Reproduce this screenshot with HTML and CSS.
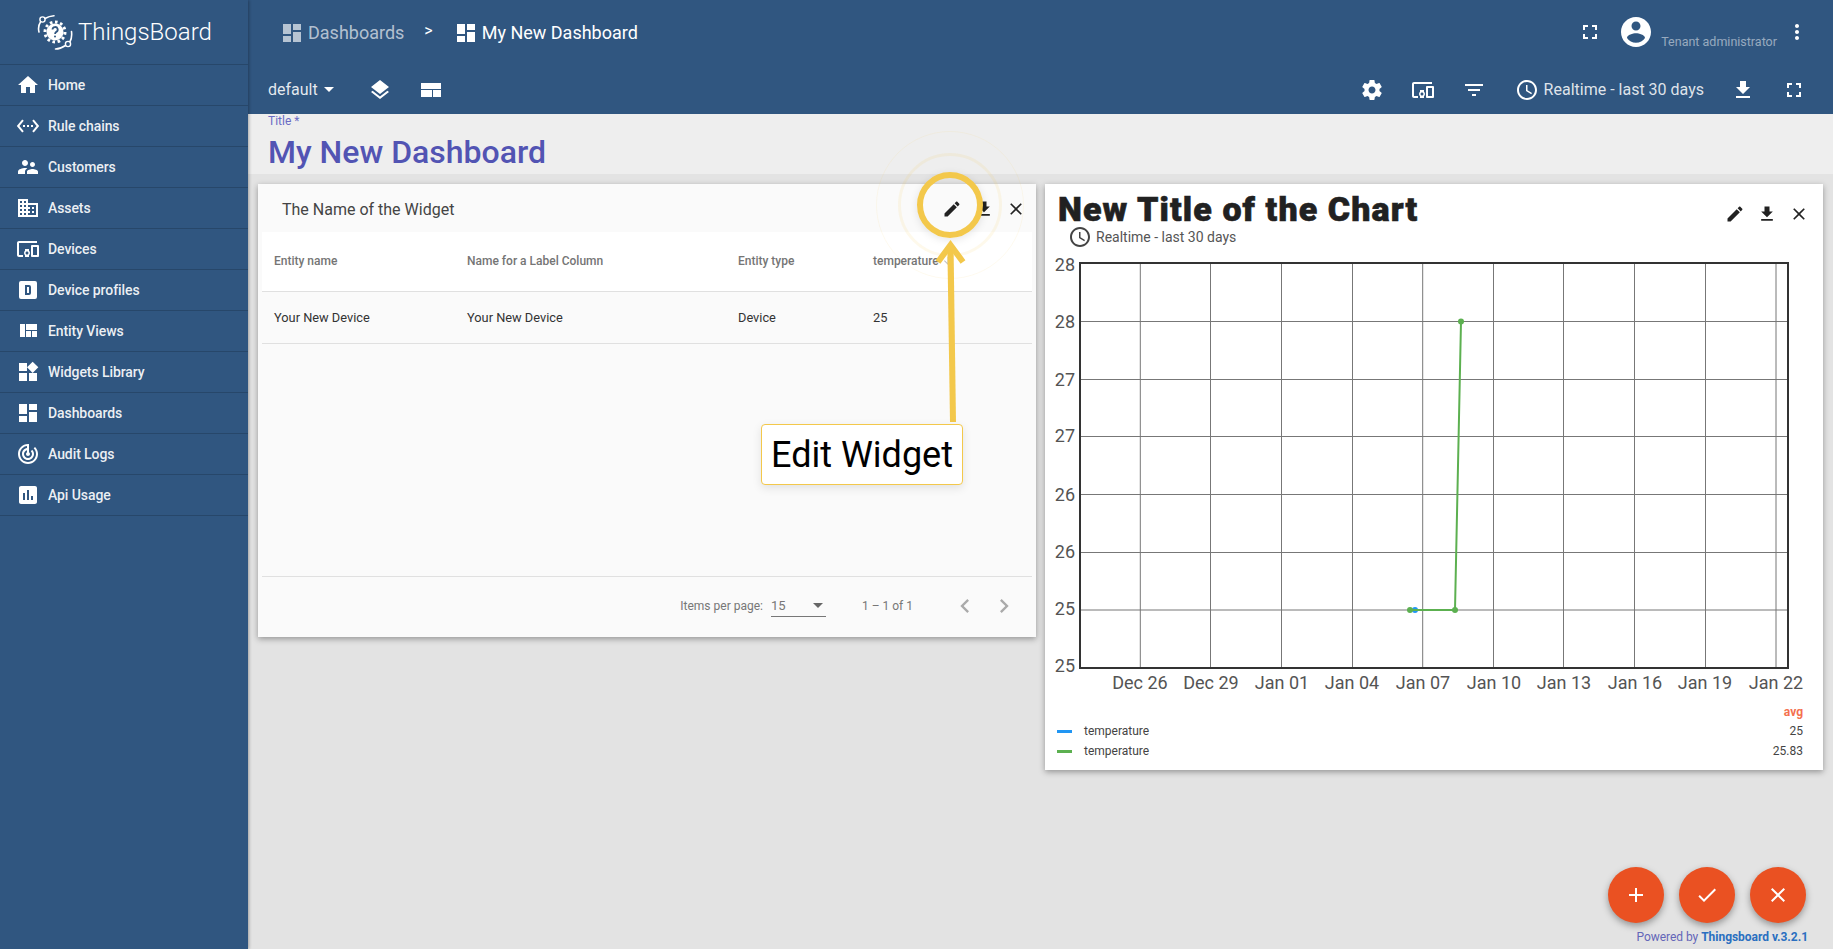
FILE: index.html
```html
<!DOCTYPE html>
<html lang="en">
<head>
<meta charset="utf-8">
<title>ThingsBoard</title>
<link rel="stylesheet" href="styles.css">
</head>
<body>
<svg class="sprite" xmlns="http://www.w3.org/2000/svg">
  <symbol id="i-home" viewBox="0 0 24 24"><path d="M10 20v-6h4v6h5v-8h3L12 3 2 12h3v8z"/></symbol>
  <symbol id="i-rule" viewBox="0 0 24 24"><path d="M7.77 6.76L6.23 5.48.82 12l5.41 6.52 1.54-1.28L3.42 12l4.35-5.24zM7 13h2v-2H7v2zm10-2h-2v2h2v-2zm-6 2h2v-2h-2v2zm6.77-7.52l-1.54 1.28L20.58 12l-4.35 5.24 1.54 1.28L23.18 12l-5.41-6.52z"/></symbol>
  <symbol id="i-people" viewBox="0 0 24 24"><path d="M16.5 12c1.38 0 2.49-1.12 2.49-2.5S17.88 7 16.5 7C15.12 7 14 8.12 14 9.5s1.12 2.5 2.5 2.5zM9 11c1.66 0 2.99-1.34 2.99-3S10.66 5 9 5C7.34 5 6 6.34 6 8s1.34 3 3 3zm7.5 3c-1.83 0-5.5.92-5.5 2.75V19h11v-2.25c0-1.83-3.67-2.75-5.5-2.75zM9 13c-2.33 0-7 1.17-7 3.5V19h7v-2.25c0-.85.33-2.34 2.37-3.47C10.5 13.1 9.66 13 9 13z"/></symbol>
  <symbol id="i-domain" viewBox="0 0 24 24"><path d="M12 7V3H2v18h20V7H12zM6 19H4v-2h2v2zm0-4H4v-2h2v2zm0-4H4V9h2v2zm0-4H4V5h2v2zm4 12H8v-2h2v2zm0-4H8v-2h2v2zm0-4H8V9h2v2zm0-4H8V5h2v2zm10 12h-8v-2h2v-2h-2v-2h2v-2h-2V9h8v10zm-2-8h-2v2h2v-2zm0 4h-2v2h2v-2z"/></symbol>
  <symbol id="i-devices" viewBox="0 0 24 24"><path d="M3 6h18V4H3c-1.1 0-2 .9-2 2v12c0 1.1.9 2 2 2h4v-2H3V6zm10 6H9v1.78c-.61.55-1 1.33-1 2.22s.39 1.67 1 2.22V20h4v-1.78c.61-.55 1-1.34 1-2.22s-.39-1.67-1-2.22V12zm-2 5.5c-.83 0-1.5-.67-1.5-1.5s.67-1.5 1.5-1.5 1.5.67 1.5 1.5-.67 1.5-1.5 1.5zM22 8h-6c-.5 0-1 .5-1 1v10c0 .5.5 1 1 1h6c.5 0 1-.5 1-1V9c0-.5-.5-1-1-1zm-1 10h-4v-8h4v8z"/></symbol>
  <symbol id="i-dbox" viewBox="0 0 24 24"><path fill-rule="evenodd" d="M9 7V17H13A2 2 0 0 0 15 15V9A2 2 0 0 0 13 7H9M11 9H13V15H11V9M5 3H19A2 2 0 0 1 21 5V19A2 2 0 0 1 19 21H5A2 2 0 0 1 3 19V5A2 2 0 0 1 5 3Z"/></symbol>
  <symbol id="i-quilt" viewBox="0 0 24 24"><path d="M10 18h5v-6h-5v6zm-6 0h5V5H4v13zm12 0h5v-6h-5v6zM10 5v6h11V5H10z"/></symbol>
  <symbol id="i-widgets" viewBox="0 0 24 24"><path d="M13 13v8h8v-8h-8zM3 21h8v-8H3v8zM3 3v8h8V3H3zm13.66-1.31L11 7.34 16.66 13l5.66-5.66-5.66-5.65z"/></symbol>
  <symbol id="i-dash" viewBox="0 0 24 24"><path d="M3 13h8V3H3v10zm0 8h8v-6H3v6zm10 0h8V11h-8v10zm0-18v6h8V3h-8z"/></symbol>
  <symbol id="i-track" viewBox="0 0 24 24"><path d="M19.07 4.93l-1.41 1.41C19.1 7.79 20 9.79 20 12c0 4.42-3.58 8-8 8s-8-3.58-8-8c0-4.08 3.05-7.44 7-7.93v2.02C8.16 6.57 6 9.03 6 12c0 3.31 2.69 6 6 6s6-2.69 6-6c0-1.66-.67-3.16-1.76-4.24l-1.41 1.41C15.55 9.9 16 10.9 16 12c0 2.21-1.79 4-4 4s-4-1.79-4-4c0-1.86 1.28-3.41 3-3.86v2.14c-.6.35-1 .98-1 1.72 0 1.1.9 2 2 2s2-.9 2-2c0-.74-.4-1.38-1-1.72V2h-1C6.48 2 2 6.48 2 12s4.48 10 10 10 10-4.48 10-10c0-2.76-1.12-5.26-2.93-7.07z"/></symbol>
  <symbol id="i-chart" viewBox="0 0 24 24"><path d="M19 3H5c-1.1 0-2 .9-2 2v14c0 1.1.9 2 2 2h14c1.1 0 2-.9 2-2V5c0-1.1-.9-2-2-2zM9 17H7v-7h2v7zm4 0h-2V7h2v10zm4 0h-2v-4h2v4z"/></symbol>
  <symbol id="i-layers" viewBox="0 0 24 24"><path d="M11.99 18.54l-7.37-5.73L3 14.07l9 7 9-7-1.63-1.27-7.38 5.74zM12 16l7.36-5.73L21 9l-9-7-9 7 1.63 1.27L12 16z"/></symbol>
  <symbol id="i-layout" viewBox="0 0 24 24"><path d="M2 5h20v6H2zM2 12h11v7H2zM14 12h8v7h-8z"/></symbol>
  <symbol id="i-full" viewBox="0 0 24 24"><path d="M7 14H5v5h5v-2H7v-3zm-2-4h2V7h3V5H5v5zm12 7h-3v2h5v-5h-2v3zM14 5v2h3v3h2V5h-5z"/></symbol>
  <symbol id="i-account" viewBox="0 0 24 24"><path d="M12 2C6.48 2 2 6.48 2 12s4.48 10 10 10 10-4.48 10-10S17.52 2 12 2zm0 3c1.66 0 3 1.34 3 3s-1.34 3-3 3-3-1.34-3-3 1.34-3 3-3zm0 14.2c-2.5 0-4.71-1.28-6-3.22.03-1.99 4-3.08 6-3.08 1.99 0 5.97 1.09 6 3.08-1.29 1.94-3.5 3.22-6 3.22z"/></symbol>
  <symbol id="i-more" viewBox="0 0 24 24"><path d="M12 8c1.1 0 2-.9 2-2s-.9-2-2-2-2 .9-2 2 .9 2 2 2zm0 2c-1.1 0-2 .9-2 2s.9 2 2 2 2-.9 2-2-.9-2-2-2zm0 6c-1.1 0-2 .9-2 2s.9 2 2 2 2-.9 2-2-.9-2-2-2z"/></symbol>
  <symbol id="i-gear" viewBox="0 0 24 24"><path d="M19.43 12.98c.04-.32.07-.64.07-.98s-.03-.66-.07-.98l2.11-1.65c.19-.15.24-.42.12-.64l-2-3.46c-.12-.22-.39-.3-.61-.22l-2.49 1c-.52-.4-1.08-.73-1.69-.98l-.38-2.65C14.46 2.18 14.25 2 14 2h-4c-.25 0-.46.18-.49.42l-.38 2.65c-.61.25-1.17.59-1.69.98l-2.49-1c-.23-.09-.49 0-.61.22l-2 3.46c-.13.22-.07.49.12.64l2.11 1.65c-.04.32-.07.65-.07.98s.03.66.07.98l-2.11 1.65c-.19.15-.24.42-.12.64l2 3.46c.12.22.39.3.61.22l2.49-1c.52.4 1.08.73 1.69.98l.38 2.65c.03.24.24.42.49.42h4c.25 0 .46-.18.49-.42l.38-2.65c.61-.25 1.17-.59 1.69-.98l2.49 1c.23.09.49 0 .61-.22l2-3.46c.12-.22.07-.49-.12-.64l-2.11-1.65zM12 15.5c-1.93 0-3.5-1.57-3.5-3.5s1.57-3.5 3.5-3.5 3.5 1.57 3.5 3.5-1.57 3.5-3.5 3.5z"/></symbol>
  <symbol id="i-filter" viewBox="0 0 24 24"><path d="M10 18h4v-2h-4v2zM3 6v2h18V6H3zm3 7h12v-2H6v2z"/></symbol>
  <symbol id="i-clock" viewBox="0 0 24 24"><path d="M11.99 2C6.47 2 2 6.48 2 12s4.47 10 9.99 10C17.52 22 22 17.52 22 12S17.52 2 11.99 2zM12 20c-4.42 0-8-3.58-8-8s3.58-8 8-8 8 3.58 8 8-3.58 8-8 8zm.5-13H11v6l5.25 3.15.75-1.23-4.5-2.67z"/></symbol>
  <symbol id="i-down" viewBox="0 0 24 24"><path d="M19 9h-4V3H9v6H5l7 7 7-7zM5 18v2h14v-2H5z"/></symbol>
  <symbol id="i-edit" viewBox="0 0 24 24"><path d="M3 17.25V21h3.75L17.81 9.94l-3.75-3.75L3 17.25zM20.71 7.04c.39-.39.39-1.02 0-1.41l-2.34-2.34c-.39-.39-1.02-.39-1.41 0l-1.83 1.83 3.75 3.75 1.83-1.83z"/></symbol>
  <symbol id="i-close" viewBox="0 0 24 24"><path d="M19 6.41L17.59 5 12 10.59 6.41 5 5 6.41 10.59 12 5 17.59 6.41 19 12 13.41 17.59 19 19 17.59 13.41 12z"/></symbol>
  <symbol id="i-add" viewBox="0 0 24 24"><path d="M19 13h-6v6h-2v-6H5v-2h6V5h2v6h6v2z"/></symbol>
  <symbol id="i-check" viewBox="0 0 24 24"><path d="M9 16.17L4.83 12l-1.42 1.41L9 19 21 7l-1.41-1.41z"/></symbol>
  <symbol id="i-prev" viewBox="0 0 24 24"><path d="M15.41 7.41L14 6l-6 6 6 6 1.41-1.41L10.83 12z"/></symbol>
  <symbol id="i-next" viewBox="0 0 24 24"><path d="M10 6L8.59 7.41 13.17 12l-4.58 4.59L10 18l6-6z"/></symbol>
  <symbol id="i-sort" viewBox="0 0 24 24"><path d="M20 12l-1.41-1.41L13 16.17V4h-2v12.17l-5.58-5.59L4 12l8 8 8-8z"/></symbol>
</svg>

<div class="app">
  <aside class="sidebar">
    <div class="brand">
      <svg class="logo" viewBox="0 0 36 36">
        <circle class="logo-teeth" cx="18" cy="18" r="10"/>
        <circle class="logo-core" cx="18" cy="18" r="8.5"/>
        <path class="logo-q" d="M15.5 15.5a2.6 2.6 0 1 1 3.8 2.4c-.9.5-1.2 1-1.2 2.1"/>
        <circle class="logo-qdot" cx="18" cy="22.6" r="1"/>
        <circle class="logo-ring" cx="5.5" cy="5.5" r="2.6"/>
        <path class="logo-arc" d="M8 4.5c2.5-1.500 5-2.500 9-2.800M3.500 8c-2 3-2.500 6-1.500 10"/>
        <circle class="logo-ring" cx="31" cy="30" r="2.600"/>
        <path class="logo-arc" d="M28.500 31.500c-3 2-6 3.500-10 3.500M33 27.500c1.700-3 2-6 1.500-10"/>
      </svg>
      <span class="brand-name">ThingsBoard</span>
    </div>
    <nav class="menu">
      <a class="menu-item"><svg class="ico"><use href="#i-home"/></svg><span>Home</span></a>
      <a class="menu-item"><svg class="ico"><use href="#i-rule"/></svg><span>Rule chains</span></a>
      <a class="menu-item"><svg class="ico"><use href="#i-people"/></svg><span>Customers</span></a>
      <a class="menu-item"><svg class="ico"><use href="#i-domain"/></svg><span>Assets</span></a>
      <a class="menu-item"><svg class="ico"><use href="#i-devices"/></svg><span>Devices</span></a>
      <a class="menu-item"><svg class="ico"><use href="#i-dbox"/></svg><span>Device profiles</span></a>
      <a class="menu-item"><svg class="ico"><use href="#i-quilt"/></svg><span>Entity Views</span></a>
      <a class="menu-item"><svg class="ico"><use href="#i-widgets"/></svg><span>Widgets Library</span></a>
      <a class="menu-item"><svg class="ico"><use href="#i-dash"/></svg><span>Dashboards</span></a>
      <a class="menu-item"><svg class="ico"><use href="#i-track"/></svg><span>Audit Logs</span></a>
      <a class="menu-item"><svg class="ico"><use href="#i-chart"/></svg><span>Api Usage</span></a>
    </nav>
  </aside>

  <main class="main">
    <header class="toolbar">
      <div class="bar-top">
        <div class="crumbs">
          <svg class="ico dim"><use href="#i-dash"/></svg>
          <span class="crumb-dim">Dashboards</span>
          <span class="crumb-sep">&gt;</span>
          <svg class="ico"><use href="#i-dash"/></svg>
          <span class="crumb-cur">My New Dashboard</span>
        </div>
        <div class="user">
          <svg class="ico"><use href="#i-full"/></svg>
          <svg class="avatar"><use href="#i-account"/></svg>
          <span class="role">Tenant administrator</span>
          <svg class="ico"><use href="#i-more"/></svg>
        </div>
      </div>
      <div class="bar-bottom">
        <div class="state">default<span class="caret"></span></div>
        <svg class="ico layers"><use href="#i-layers"/></svg>
        <svg class="ico layout"><use href="#i-layout"/></svg>
        <div class="actions">
          <svg class="ico"><use href="#i-gear"/></svg>
          <svg class="ico"><use href="#i-devices"/></svg>
          <svg class="ico"><use href="#i-filter"/></svg>
          <div class="timewindow"><svg class="ico"><use href="#i-clock"/></svg><span>Realtime - last 30 days</span></div>
          <svg class="ico"><use href="#i-down"/></svg>
          <svg class="ico"><use href="#i-full"/></svg>
        </div>
      </div>
    </header>

    <section class="title-panel">
      <div class="title-label">Title *</div>
      <div class="title-value">My New Dashboard</div>
    </section>

    <section class="grid">
      <article class="widget table-widget">
        <div class="table-head">
          <span class="table-title">The Name of the Widget</span>
          <div class="tools">
            <svg class="tool"><use href="#i-edit"/></svg>
            <svg class="tool"><use href="#i-down"/></svg>
            <svg class="tool"><use href="#i-close"/></svg>
          </div>
        </div>
        <div class="table">
          <div class="row row-head">
            <span>Entity name</span><span>Name for a Label Column</span><span>Entity type</span>
            <span>temperature<svg class="sort"><use href="#i-sort"/></svg></span>
          </div>
          <div class="row row-body">
            <span>Your New Device</span><span>Your New Device</span><span>Device</span><span>25</span>
          </div>
        </div>
        <div class="pager">
          <span>Items per page:</span>
          <div class="page-select"><span>15</span><i class="select-caret"></i></div>
          <span class="range">1 – 1 of 1</span>
          <svg class="page-btn"><use href="#i-prev"/></svg>
          <svg class="page-btn"><use href="#i-next"/></svg>
        </div>
      </article>

      <article class="widget chart-widget">
        <div class="chart-head">
          <div>
            <h2 class="chart-title">New Title of the Chart</h2>
            <div class="chart-sub"><svg class="sub-ico"><use href="#i-clock"/></svg><span>Realtime - last 30 days</span></div>
          </div>
          <div class="tools chart-tools">
            <svg class="tool"><use href="#i-edit"/></svg>
            <svg class="tool"><use href="#i-down"/></svg>
            <svg class="tool"><use href="#i-close"/></svg>
          </div>
        </div>
        <svg class="plot" viewBox="0 0 778 445">
          <g class="grid-lines">
            <line x1="35" x2="743" y1="68.500" y2="68.500"/><line x1="35" x2="743" y1="126.500" y2="126.500"/><line x1="35" x2="743" y1="183.500" y2="183.500"/><line x1="35" x2="743" y1="241.500" y2="241.500"/><line x1="35" x2="743" y1="299.500" y2="299.500"/><line x1="35" x2="743" y1="357" y2="357"/>
            <line x1="95.300" x2="95.300" y1="10" y2="415"/><line x1="165.500" x2="165.500" y1="10" y2="415"/><line x1="236.500" x2="236.500" y1="10" y2="415"/><line x1="307.500" x2="307.500" y1="10" y2="415"/><line x1="377.700" x2="377.700" y1="10" y2="415"/><line x1="448.500" x2="448.500" y1="10" y2="415"/><line x1="518.500" x2="518.500" y1="10" y2="415"/><line x1="589.500" x2="589.500" y1="10" y2="415"/><line x1="660.500" x2="660.500" y1="10" y2="415"/><line x1="731" x2="731" y1="10" y2="415"/>
          </g>
          <rect class="plot-frame" x="35" y="10" width="708" height="405"/>
          <g class="y-labels">
            <text x="30" y="18">28</text><text x="30" y="75">28</text><text x="30" y="133">27</text><text x="30" y="189">27</text><text x="30" y="248">26</text><text x="30" y="305">26</text><text x="30" y="362">25</text><text x="30" y="419">25</text>
          </g>
          <g class="x-labels">
            <text x="95" y="436">Dec 26</text><text x="166" y="436">Dec 29</text><text x="237" y="436">Jan 01</text><text x="307" y="436">Jan 04</text><text x="378" y="436">Jan 07</text><text x="449" y="436">Jan 10</text><text x="519" y="436">Jan 13</text><text x="590" y="436">Jan 16</text><text x="660" y="436">Jan 19</text><text x="731" y="436">Jan 22</text>
          </g>
          <circle class="pt-blue" cx="370" cy="357" r="3"/>
          <polyline class="line-green" points="365,357 410,357 416,68.500"/>
          <circle class="pt-green" cx="365" cy="357" r="3"/><circle class="pt-green" cx="410" cy="357" r="3"/><circle class="pt-green" cx="416" cy="68.500" r="3"/>
        </svg>
        <div class="legend">
          <div class="legend-head">avg</div>
          <div class="legend-row"><i class="swatch blue"></i><span class="legend-name">temperature</span><span>25</span></div>
          <div class="legend-row"><i class="swatch green"></i><span class="legend-name">temperature</span><span>25.83</span></div>
        </div>
      </article>
    </section>

    <div class="fabs">
      <button class="fab"><svg class="ico"><use href="#i-add"/></svg></button>
      <button class="fab"><svg class="ico"><use href="#i-check"/></svg></button>
      <button class="fab"><svg class="ico"><use href="#i-close"/></svg></button>
    </div>
    <div class="powered">Powered by <b>Thingsboard v.3.2.1</b></div>
  </main>
</div>

<div class="halo halo-outer"></div>
<div class="halo halo-inner"></div>
<div class="focus-ring"></div>
<svg class="pointer" viewBox="0 0 40 190">
  <polygon points="17.400,14 23.600,14 26,186 20,186"/>
  <polyline points="8,26 20.500,9 33,26"/>
</svg>
<div class="callout">Edit Widget</div>
</body>
</html>
```

FILE: styles.css
```css
* { box-sizing: border-box; }
html, body { margin: 0; height: 100%; overflow: hidden; }
body { font-family: Roboto, "Noto Sans", sans-serif; color: #222; background: #e3e3e3; }
.sprite { display: none; }
.ico { width: 24px; height: 24px; fill: #fff; flex: none; display: block; }
.ico.dim { fill: rgba(255,255,255,.65); }

.app { display: flex; height: 100vh; }

/* sidebar */
.sidebar { width: 248px; flex: none; background: #305680; color: #fff; box-shadow: 1px 0 3px rgba(0,0,0,.3); z-index: 2; }
.brand { height: 65px; display: flex; align-items: center; padding: 0 0 1px 37px; border-bottom: 1px solid rgba(0,0,0,.17); }
.logo { width: 36px; height: 36px; flex: none; margin-right: 5px; }
.logo-teeth { fill: none; stroke: #fff; stroke-width: 3; stroke-dasharray: 2.6 2.6; }
.logo-core { fill: #fff; }
.logo-q { fill: none; stroke: #305680; stroke-width: 1.8; }
.logo-qdot { fill: #305680; }
.logo-ring { fill: none; stroke: #fff; stroke-width: 1.4; }
.logo-arc { fill: none; stroke: #fff; stroke-width: 1.6; stroke-linecap: round; }
.brand-name { font-size: 24px; font-weight: 300; color: #fff; }
.menu-item { display: flex; align-items: center; height: 41px; padding-left: 16px; border-bottom: 1px solid rgba(0,0,0,.17); font-size: 14px; font-weight: 500; letter-spacing: -.08px; color: rgba(255,255,255,.92); }
.menu-item span { margin-left: 8px; }

/* main column */
.main { flex: 1; min-width: 0; display: flex; flex-direction: column; }
.toolbar { height: 114px; flex: none; background: #305680; color: #fff; }
.bar-top { height: 64px; display: flex; align-items: center; justify-content: space-between; padding: 0 24px 0 32px; }
.crumbs { display: flex; align-items: center; font-size: 18px; padding-top: 1px; }
.crumb-dim { margin-left: 4px; color: rgba(255,255,255,.65); }
.crumb-sep { margin: -4px 21px 0 20px; font-size: 16px; }
.crumb-cur { margin-left: 4px; }
.user { display: flex; align-items: center; }
.avatar { width: 36px; height: 36px; fill: #fff; margin: 0 7px 0 16px; }
.role { font-size: 12.500px; color: rgba(255,255,255,.5); margin: 18px 8px 0 0; }
.bar-bottom { height: 50px; display: flex; align-items: center; padding: 1px 27px 0 20px; }
.state { font-size: 16px; color: rgba(255,255,255,.88); display: flex; align-items: center; }
.caret { margin-left: 6px; border: 5px solid transparent; border-top-color: #fff; border-bottom: 0; }
.layers { margin-left: 34px; }
.layout { margin-left: 27px; }
.actions { margin-left: auto; display: flex; align-items: center; gap: 27px; }
.timewindow { display: flex; align-items: center; gap: 5px; font-size: 16px; color: rgba(255,255,255,.85); margin-left: 2px; }

/* title */
.title-panel { height: 60px; flex: none; background: #eee; padding-left: 20px; }
.title-label { font-size: 12px; line-height: 14px; color: #6a6bc4; }
.title-value { font-size: 32px; font-weight: 500; line-height: 42px; margin-top: 3px; color: #5254b3; }

/* widgets */
.grid { flex: 1; display: grid; grid-template-columns: 778px 778px; column-gap: 9px; align-items: start; padding: 10px; }
.widget { display: flex; flex-direction: column; box-shadow: 0 2px 6px rgba(0,0,0,.35); }
.table-widget { height: 453px; background: #fafafa; padding: 0 4px; }
.table-head { height: 48px; flex: none; display: flex; align-items: center; justify-content: space-between; padding: 2px 0 0 20px; }
.table-title { font-size: 16px; color: #444; }
.tools { display: flex; gap: 12px; padding-right: 6px; }
.tool { width: 20px; height: 20px; fill: #222; display: block; }
.table { flex: 1; font-size: 12.800px; }
.row { display: grid; grid-template-columns: 193px 271px 135px 1fr; align-items: center; padding-left: 12px; border-bottom: 1px solid #e0e0e0; }
.row-head { height: 60px; padding-bottom: 2px; background: #fff; font-size: 12px; font-weight: 500; color: #757575; }
.row-body { height: 52px; color: #333; }
.sort { width: 12px; height: 12px; fill: rgba(0,0,0,.25); margin-left: 3px; vertical-align: -2px; }
.pager { height: 61px; flex: none; display: flex; align-items: center; justify-content: flex-end; border-top: 1px solid #e0e0e0; padding: 0 14px 2px 0; font-size: 12px; color: #777; }
.page-select { width: 55px; height: 22px; margin: 0 36px 0 8px; border-bottom: 1px solid #777; display: flex; justify-content: space-between; align-items: center; font-size: 13px; }
.select-caret { border: 5.500px solid transparent; border-top-color: #666; border-bottom: 0; margin-right: 3px; }
.range { margin-right: 10px; }
.page-btn { width: 28px; height: 28px; fill: #aaa; margin-left: 11px; }
.range + .page-btn { margin-left: 28px; }

.chart-widget { height: 586px; background: #fff; }
.chart-head { height: 69px; flex: none; display: flex; justify-content: space-between; padding-left: 13px; }
.chart-title { margin: 7px 0 0; font-size: 34px; line-height: 36px; font-weight: 900; letter-spacing: 1.100px; -webkit-text-stroke: .6px #212121; color: #212121; }
.chart-sub { display: flex; align-items: center; gap: 4px; margin: -2px 0 0 11px; font-size: 14px; color: #555; }
.sub-ico { width: 24px; height: 24px; fill: #444; margin-left: -1px; }
.chart-tools { align-items: center; height: 60px; gap: 12px; padding-right: 14px; }
.plot { width: 778px; height: 445px; flex: none; display: block; }
.grid-lines line { stroke: #777; stroke-width: 1; }
.plot-frame { fill: none; stroke: #333; stroke-width: 2; }
.y-labels text { font-family: Roboto, sans-serif; font-size: 18px; fill: #545454; text-anchor: end; }
.x-labels text { font-family: Roboto, sans-serif; font-size: 18px; fill: #545454; text-anchor: middle; }
.pt-blue { fill: #2196f3; }
.pt-green { fill: #5cb050; }
.line-green { fill: none; stroke: #5cb050; stroke-width: 2; }
.legend { padding: 5px 20px 0 12px; font-size: 12px; color: #444; }
.legend-head { text-align: right; font-weight: 700; font-size: 12px; line-height: 18px; color: #f4714f; }
.legend-row { display: flex; align-items: center; height: 20px; }
.swatch { width: 15px; height: 3px; flex: none; }
.swatch.blue { background: #2196f3; }
.swatch.green { background: #5cb050; }
.legend-name { flex: 1; margin-left: 12px; }

/* floating controls */
.fabs { position: absolute; right: 27px; bottom: 26px; display: flex; gap: 15px; z-index: 3; }
.fab { width: 56px; height: 56px; border: 0; border-radius: 50%; background: #ea5122; display: flex; align-items: center; justify-content: center; padding: 0; box-shadow: 0 3px 7px rgba(0,0,0,.35); }
.powered { position: absolute; right: 25px; bottom: 5px; font-size: 12px; letter-spacing: -.03px; color: #6366b8; z-index: 3; }
.powered b { color: #2a6fc0; font-weight: 700; }

/* annotation overlay */
.halo { position: absolute; border-radius: 50%; z-index: 4; }
.halo-outer { left: 876px; top: 131px; width: 148px; height: 148px; border: 1px solid rgba(243,200,75,.09); }
.halo-inner { left: 898px; top: 153px; width: 104px; height: 104px; border: 3px solid rgba(243,200,75,.11); }
.focus-ring { position: absolute; left: 917px; top: 172px; width: 66px; height: 66px; border: 6.500px solid #f3c84b; border-radius: 50%; box-shadow: 0 2px 8px rgba(0,0,0,.1); z-index: 5; }
.pointer { position: absolute; left: 930px; top: 236px; width: 40px; height: 190px; z-index: 5; }
.pointer polygon { fill: #f3c84b; }
.pointer polyline { fill: none; stroke: #f3c84b; stroke-width: 6; }
.callout { position: absolute; left: 761px; top: 424px; width: 202px; height: 61px; background: #fff; border: 1px solid #f3c84b; border-radius: 4px; box-shadow: 0 3px 10px rgba(0,0,0,.1); font-size: 36px; line-height: 61px; text-align: center; color: #000; z-index: 6; }
```
